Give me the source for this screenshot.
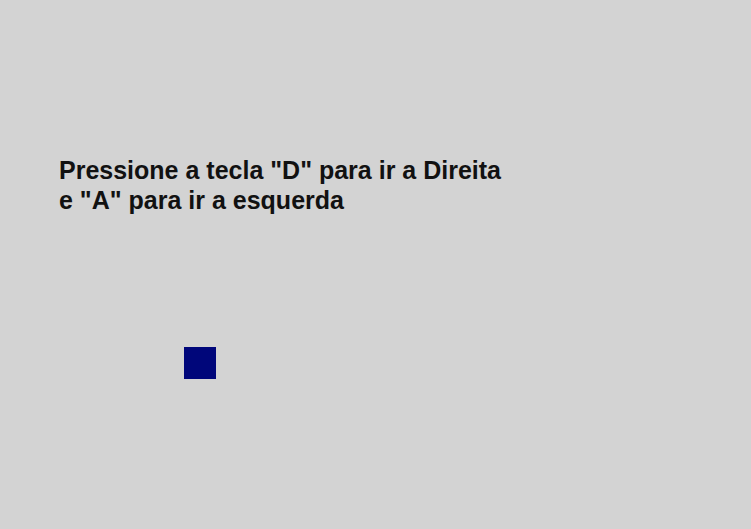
import React from 'react';

const App: React.FC = () => {
  return (
    <div className="w-full h-[529px] bg-[#d3d3d3] overflow-hidden pt-[155px] pl-[59px] font-['Liberation_Sans',Arial,sans-serif]">
      <p className="text-[25px] leading-[30px] font-bold text-[#111111]">
        Pressione a tecla "D" para ir a Direita
        <br />
        e "A" para ir a esquerda
      </p>
      <div className="mt-[132px] ml-[125px] w-[32px] h-[32px] bg-[#00067a]" />
    </div>
  );
};

export default App;
